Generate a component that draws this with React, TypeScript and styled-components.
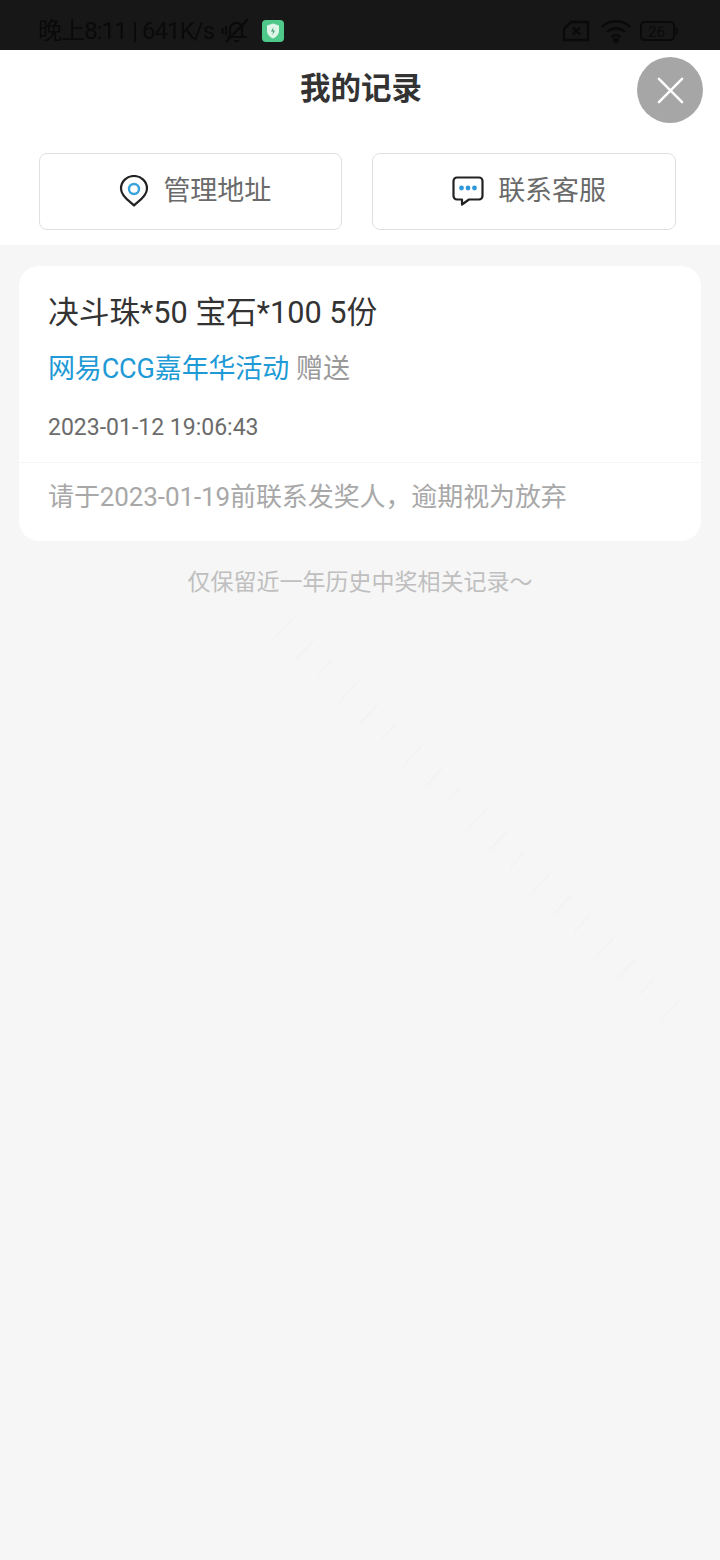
import { FC } from "react";
import styled, { createGlobalStyle } from "styled-components";

const GlobalStyle = createGlobalStyle`
    html, body {
        margin: 0;
        padding: 0;
        background: #f6f6f6;
    }
    * {
        box-sizing: border-box;
    }
`;

const Page = styled.div`
    position: relative;
    width: 720px;
    height: 1560px;
    overflow: hidden;
    display: flex;
    flex-direction: column;
    background: #f6f6f6;
    font-family: Roboto, "Noto Sans CJK SC", sans-serif;
`;

const StatusBar = styled.div`
    height: 50px;
    flex: none;
    padding: 12px 42px 0 38px;
    display: flex;
    align-items: center;
    justify-content: space-between;
    background: #171718;
    color: #0a0a0a;
`;

const StatusGroup = styled.div`
    display: flex;
    align-items: center;
`;

const StatusText = styled.span`
    font-size: 24px;
    line-height: 30px;
    letter-spacing: -0.9px;
    white-space: nowrap;
    filter: blur(0.5px);
`;

const Header = styled.div`
    position: relative;
    flex: none;
    height: 195px;
    background: #fff;
`;

const Title = styled.h1`
    margin: 0;
    padding: 17px 0 0 2px;
    font-size: 30.5px;
    line-height: 44px;
    font-weight: 700;
    text-align: center;
    color: #333;
`;

const CloseButton = styled.div`
    position: absolute;
    top: 7px;
    right: 17px;
    width: 66px;
    height: 66px;
    border-radius: 50%;
    background: #a6a6a6;
    display: flex;
    align-items: center;
    justify-content: center;
`;

const ActionRow = styled.div`
    display: flex;
    gap: 30px;
    margin-top: 42px;
    padding: 0 44px 0 38.5px;
`;

const ActionButton = styled.div`
    flex: 1;
    height: 77px;
    padding-left: 10px;
    display: flex;
    align-items: center;
    justify-content: center;
    gap: 14px;
    border: 1.5px solid #e0e0e0;
    border-radius: 8px;
    color: #6a6a6a;
    font-size: 27px;
    line-height: 70px;
`;

const ActionLabel = styled.span`
    position: relative;
    top: -1px;
`;

const ActionIcon = styled.svg`
    position: relative;
    top: -1px;
    flex: none;
`;

const List = styled.div`
    padding: 21px 19px 0;
`;

const Card = styled.div`
    height: 275px;
    background: #fff;
    border-radius: 20px;
    overflow: hidden;
`;

const CardBody = styled.div`
    height: 197px;
    padding: 26px 29px 0;
    border-bottom: 1px solid #f6f6f6;
`;

const PrizeName = styled.div`
    font-size: 30.7px;
    line-height: 42px;
    color: #333;
`;

const Source = styled.div`
    margin-top: 15px;
    font-size: 27px;
    line-height: 40px;
    letter-spacing: -0.15px;
    color: #999;
`;

const SourceLink = styled.span`
    color: #1e9ad6;
    margin-right: 7px;
`;

const DateText = styled.div`
    margin-top: 22px;
    font-size: 23px;
    line-height: 34px;
    color: #6b6b6b;
`;

const Notice = styled.div`
    padding: 15px 29px 0;
    font-size: 26px;
    line-height: 38px;
    letter-spacing: -0.1px;
    color: #a8a8a8;
`;

const Footnote = styled.div`
    margin-top: 25px;
    font-size: 23px;
    line-height: 34px;
    text-align: center;
    color: #bfbfbf;
`;

const Watermark = styled.svg`
    position: absolute;
    left: 0;
    top: 600px;
    pointer-events: none;
`;

const streaks = Array.from({ length: 19 }, (_, i) => ({
    x: 275 + i * 21.4,
    y: 18 + i * 21.3,
    short: i % 3 === 2,
}));

const PinIcon: FC = () => (
    <ActionIcon width="30" height="32" viewBox="0 0 30 32" fill="none">
        <path
            d="M15 30.5 C12.5 27.5 2 22 2 13.5 A13 12.5 0 0 1 28 13.5 C28 22 17.5 27.5 15 30.5 Z"
            stroke="#222"
            strokeWidth="2.2"
            strokeLinejoin="round"
        />
        <circle cx="15" cy="14" r="5" stroke="#38a3dc" strokeWidth="2.4" />
    </ActionIcon>
);

const ChatIcon: FC = () => (
    <ActionIcon width="32" height="30" viewBox="0 0 32 30" fill="none">
        <path
            d="M5 1.5 H27 A3.5 3.5 0 0 1 30.5 5 V20 A3.5 3.5 0 0 1 27 23.5 H17 L10 28.5 V23.5 H5 A3.5 3.5 0 0 1 1.5 20 V5 A3.5 3.5 0 0 1 5 1.5 Z"
            stroke="#222"
            strokeWidth="2.2"
            strokeLinejoin="round"
        />
        <circle cx="9.5" cy="12" r="2.4" fill="#2f97d8" />
        <circle cx="16" cy="12" r="2.4" fill="#2f97d8" />
        <circle cx="22.5" cy="12" r="2.4" fill="#2f97d8" />
    </ActionIcon>
);

const StatusIcon = styled.svg<{ $gap: number }>`
    margin-left: ${(props) => props.$gap}px;
    flex: none;
`;

const MuteIcon: FC = () => (
    <StatusIcon $gap={7} width="30" height="28" viewBox="0 0 30 28" fill="none" stroke="#0a0a0a" strokeWidth="2.2">
        <path d="M9 20 V12 A6.5 6.5 0 0 1 21 9 V20 M6 20 H26 M13 24 H18 M5 25 L27 2" />
        <path d="M1.5 11 V17 M5 9 V18" />
    </StatusIcon>
);

const ShieldBadge: FC = () => (
    <StatusIcon $gap={11} width="22" height="22" viewBox="0 0 22 22">
        <rect width="22" height="22" rx="4" fill="#4fc98a" />
        <path d="M11 3.5 L17 5.5 V11 C17 14.5 14 17 11 18.5 C8 17 5 14.5 5 11 V5.5 Z" fill="#dff5e8" />
        <path d="M11.5 7 L9 11.5 H11 L10.5 15 L13 10.5 H11 Z" fill="#4a9a76" />
    </StatusIcon>
);

const SimIcon: FC = () => (
    <StatusIcon $gap={0} width="28" height="22" viewBox="0 0 28 22" fill="none" stroke="#0a0a0a" strokeWidth="2.4">
        <path d="M9 2 H26 V20 H2 V9 Z" strokeLinejoin="round" />
        <path d="M11 7.5 L18 14.5 M18 7.5 L11 14.5" />
    </StatusIcon>
);

const WifiIcon: FC = () => (
    <StatusIcon $gap={10} width="32" height="24" viewBox="0 0 32 24" fill="none" stroke="#0a0a0a" strokeWidth="2.6">
        <path d="M2 8 A20 20 0 0 1 30 8" />
        <path d="M7 13 A13 13 0 0 1 25 13" />
        <path d="M11.5 18 A6.5 6.5 0 0 1 20.5 18" />
        <circle cx="16" cy="21.5" r="1.5" fill="#0a0a0a" />
    </StatusIcon>
);

const BatteryIcon: FC = () => (
    <StatusIcon $gap={8} width="38" height="20" viewBox="0 0 38 20" fill="none">
        <rect x="1" y="1" width="33" height="18" rx="3.5" stroke="#0a0a0a" strokeWidth="2" />
        <rect x="35.5" y="6.5" width="2" height="7" fill="#0a0a0a" />
        <text x="8" y="15.5" fontSize="15" fill="#0a0a0a" fontFamily="Roboto, sans-serif">
            26
        </text>
    </StatusIcon>
);

const App: FC = () => {
    return (
        <Page>
            <GlobalStyle />
            <StatusBar>
                <StatusGroup>
                    <StatusText>晚上8:11 | 641K/s</StatusText>
                    <MuteIcon />
                    <ShieldBadge />
                </StatusGroup>
                <StatusGroup>
                    <SimIcon />
                    <WifiIcon />
                    <BatteryIcon />
                </StatusGroup>
            </StatusBar>
            <Header>
                <Title>我的记录</Title>
                <CloseButton>
                    <svg width="27" height="27" viewBox="0 0 28 28" stroke="#fff" strokeWidth="2.6" strokeLinecap="round">
                        <path d="M2 2 L26 26 M26 2 L2 26" />
                    </svg>
                </CloseButton>
                <ActionRow>
                    <ActionButton>
                        <PinIcon />
                        <ActionLabel>管理地址</ActionLabel>
                    </ActionButton>
                    <ActionButton>
                        <ChatIcon />
                        <ActionLabel>联系客服</ActionLabel>
                    </ActionButton>
                </ActionRow>
            </Header>
            <List>
                <Card>
                    <CardBody>
                        <PrizeName>决斗珠*50 宝石*100 5份</PrizeName>
                        <Source>
                            <SourceLink>网易CCG嘉年华活动</SourceLink>
                            赠送
                        </Source>
                        <DateText>2023-01-12 19:06:43</DateText>
                    </CardBody>
                    <Notice>请于2023-01-19前联系发奖人，逾期视为放弃</Notice>
                </Card>
                <Footnote>仅保留近一年历史中奖相关记录～</Footnote>
            </List>
            <Watermark width="720" height="440" viewBox="0 0 720 440">
                {streaks.map((s, i) => (
                    <line
                        key={i}
                        x1={s.x}
                        y1={s.y + (s.short ? 15 : 20)}
                        x2={s.x + (s.short ? 14 : 18)}
                        y2={s.y}
                        stroke="#f3f3f3"
                        strokeWidth="2"
                    />
                ))}
            </Watermark>
        </Page>
    );
};

export default App;
